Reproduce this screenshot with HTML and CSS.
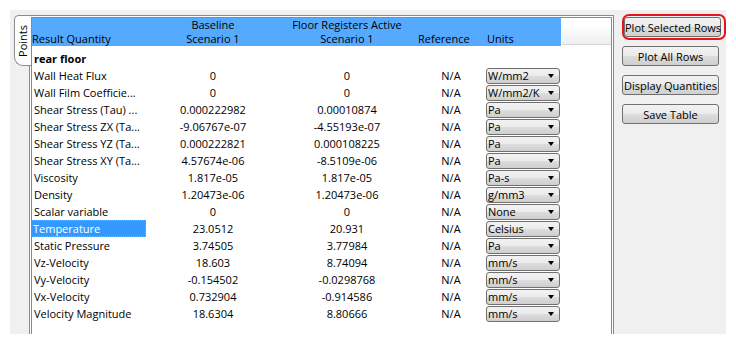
FILE: index.html
```html
<!DOCTYPE html>
<html lang="en">
<head>
  <meta charset="UTF-8">
  <title>Result Quantities</title>
  <link rel="stylesheet" href="styles.css">
</head>
<body>
  <div class="window">
    <!-- Vertical tab -->
    <div class="tabbar">
      <div class="tab"><span>Points</span></div>
    </div>

    <!-- Results table -->
    <div class="panel">
      <div class="grid head">
        <div class="hcell first">Result Quantity</div>
        <div class="hcell">Baseline<br>Scenario 1</div>
        <div class="hcell">Floor Registers Active<br>Scenario 1</div>
        <div class="hcell ref">Reference</div>
        <div class="hcell units">Units</div>
        <div class="hcell filler"><div class="filler-bar"></div></div>
      </div>

      <div class="rows">
        <div class="grid row"><div class="name group">rear floor</div></div>

        <div class="grid row">
          <div class="name">Wall Heat Flux</div><div class="num">0</div><div class="num">0</div><div class="na">N/A</div>
          <div class="combo"><span>W/mm2</span><i class="arrow"></i></div>
        </div>
        <div class="grid row">
          <div class="name">Wall Film Coefficie...</div><div class="num">0</div><div class="num">0</div><div class="na">N/A</div>
          <div class="combo"><span>W/mm2/K</span><i class="arrow"></i></div>
        </div>
        <div class="grid row">
          <div class="name">Shear Stress (Tau) ...</div><div class="num">0.000222982</div><div class="num">0.00010874</div><div class="na">N/A</div>
          <div class="combo"><span>Pa</span><i class="arrow"></i></div>
        </div>
        <div class="grid row">
          <div class="name">Shear Stress ZX (Ta...</div><div class="num">-9.06767e-07</div><div class="num">-4.55193e-07</div><div class="na">N/A</div>
          <div class="combo"><span>Pa</span><i class="arrow"></i></div>
        </div>
        <div class="grid row">
          <div class="name">Shear Stress YZ (Ta...</div><div class="num">0.000222821</div><div class="num">0.000108225</div><div class="na">N/A</div>
          <div class="combo"><span>Pa</span><i class="arrow"></i></div>
        </div>
        <div class="grid row">
          <div class="name">Shear Stress XY (Ta...</div><div class="num">4.57674e-06</div><div class="num">-8.5109e-06</div><div class="na">N/A</div>
          <div class="combo"><span>Pa</span><i class="arrow"></i></div>
        </div>
        <div class="grid row">
          <div class="name">Viscosity</div><div class="num">1.817e-05</div><div class="num">1.817e-05</div><div class="na">N/A</div>
          <div class="combo"><span>Pa-s</span><i class="arrow"></i></div>
        </div>
        <div class="grid row">
          <div class="name">Density</div><div class="num">1.20473e-06</div><div class="num">1.20473e-06</div><div class="na">N/A</div>
          <div class="combo"><span>g/mm3</span><i class="arrow"></i></div>
        </div>
        <div class="grid row">
          <div class="name">Scalar variable</div><div class="num">0</div><div class="num">0</div><div class="na">N/A</div>
          <div class="combo"><span>None</span><i class="arrow"></i></div>
        </div>
        <div class="grid row">
          <div class="name"><span class="selected">Temperature</span></div><div class="num">23.0512</div><div class="num">20.931</div><div class="na">N/A</div>
          <div class="combo"><span>Celsius</span><i class="arrow"></i></div>
        </div>
        <div class="grid row">
          <div class="name">Static Pressure</div><div class="num">3.74505</div><div class="num">3.77984</div><div class="na">N/A</div>
          <div class="combo"><span>Pa</span><i class="arrow"></i></div>
        </div>
        <div class="grid row">
          <div class="name">Vz-Velocity</div><div class="num">18.603</div><div class="num">8.74094</div><div class="na">N/A</div>
          <div class="combo"><span>mm/s</span><i class="arrow"></i></div>
        </div>
        <div class="grid row">
          <div class="name">Vy-Velocity</div><div class="num">-0.154502</div><div class="num">-0.0298768</div><div class="na">N/A</div>
          <div class="combo"><span>mm/s</span><i class="arrow"></i></div>
        </div>
        <div class="grid row">
          <div class="name">Vx-Velocity</div><div class="num">0.732904</div><div class="num">-0.914586</div><div class="na">N/A</div>
          <div class="combo"><span>mm/s</span><i class="arrow"></i></div>
        </div>
        <div class="grid row">
          <div class="name">Velocity Magnitude</div><div class="num">18.6304</div><div class="num">8.80666</div><div class="na">N/A</div>
          <div class="combo"><span>mm/s</span><i class="arrow"></i></div>
        </div>
      </div>
    </div>

    <!-- Action buttons -->
    <div class="side">
      <div class="highlight"><button>Plot Selected Rows</button></div>
      <button>Plot All Rows</button>
      <button>Display Quantities</button>
      <button>Save Table</button>
    </div>
  </div>
</body>
</html>
```

FILE: styles.css
```css
* {
  margin: 0;
  padding: 0;
  box-sizing: border-box;
}
body {
  background: #fff;
  font-family: "Open Sans", "Noto Sans", sans-serif;
  font-size: 11px;
  color: #000;
}
.window {
  margin: 10px 0 0 10px;
  width: 716px;
  height: 324px;
  background: #f0f0f0;
  display: flex;
}
.tabbar {
  width: 19px;
  padding-top: 5px;
  display: flex;
  justify-content: flex-end;
}
.tab {
  width: 17px;
  height: 51px;
  margin-right: -2px;
  background: #fff;
  border: 1px solid #898c95;
  border-right: none;
  border-radius: 5px 0 0 9px;
  position: relative;
  z-index: 1;
  display: flex;
  align-items: center;
  justify-content: center;
}
.tab span {
  writing-mode: vertical-rl;
  transform: rotate(180deg);
  line-height: 14px;
}
.panel {
  margin-top: 5px;
  width: 586px;
  background: #fff;
  border: 3px double #8a8a8a;
  border-bottom: none;
}
.grid {
  display: grid;
  grid-template-columns: 118px 126px 142px 68px 75px 1fr;
}
.head {
  height: 27px;
}
.hcell {
  background: #55aaff;
  line-height: 14px;
  display: flex;
  flex-direction: column;
  justify-content: flex-end;
  text-align: center;
  white-space: nowrap;
}
.hcell.first {
  text-align: left;
}
.hcell.ref {
  padding-right: 20px;
}
.hcell.units {
  text-align: left;
  padding-left: 1px;
}
.hcell.filler {
  background: #fff;
  padding-left: 1px;
}
.filler-bar {
  height: 17px;
  margin-bottom: 1px;
  background: linear-gradient(#fbfbfc, #eeeff1);
  border-bottom: 1px solid #d5d5d5;
}
.rows {
  padding-top: 5px;
}
.row {
  height: 17px;
  line-height: 17px;
  white-space: nowrap;
}
.name {
  padding-left: 2px;
  overflow: hidden;
}
.group {
  font-weight: bold;
}
.num {
  text-align: center;
}
.na {
  text-align: center;
  padding-right: 2px;
}
.selected {
  display: block;
  width: 115px;
  margin-left: -3px;
  padding-left: 2px;
  background: #3399ff;
  color: #fff;
  outline: 1px dotted #e8a040;
  outline-offset: -1px;
}
.combo {
  width: 74px;
  height: 16px;
  margin-top: 1px;
  border: 1px solid #707070;
  border-radius: 3px;
  background: linear-gradient(#f2f2f2, #ebebeb 50%, #dddddd 50%, #cfcfcf);
  display: flex;
  align-items: center;
  justify-content: space-between;
  padding: 0 5px 0 1px;
  line-height: 14px;
}
.arrow {
  width: 0;
  height: 0;
  border-left: 3.5px solid transparent;
  border-right: 3.5px solid transparent;
  border-top: 4px solid #000;
}
.side {
  flex: 1;
  padding: 4px 0 0 8px;
  display: flex;
  flex-direction: column;
  align-items: flex-start;
}
button {
  width: 97px;
  height: 20px;
  padding: 0;
  white-space: nowrap;
  font: inherit;
  color: #000;
  border: 1px solid #707070;
  border-radius: 3px;
  background: linear-gradient(#f2f2f2, #ebebeb 50%, #dddddd 50%, #cfcfcf);
  margin-top: 9px;
}
.highlight {
  border: 2px solid #e8141b;
  border-radius: 7px;
  padding: 1px 3px 1px 0;
  margin-bottom: -3px;
}
.highlight button {
  margin-top: 0;
}
```
